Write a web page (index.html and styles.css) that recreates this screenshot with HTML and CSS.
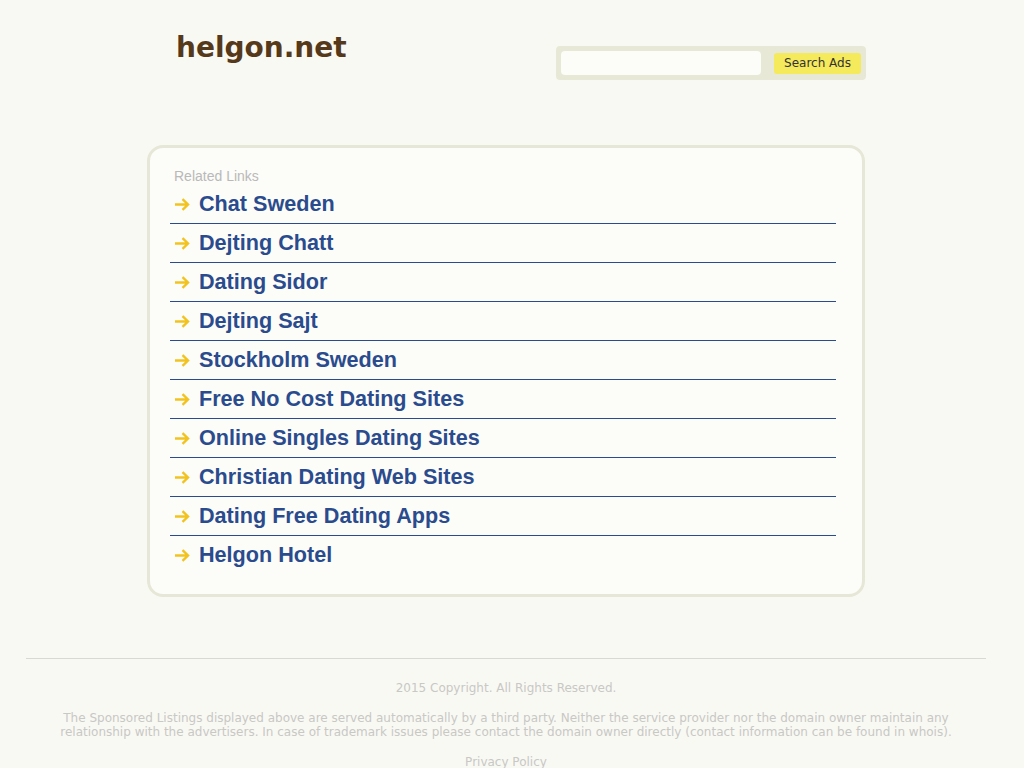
FILE: index.html
```html
<!DOCTYPE html>
<html>
<head>
<meta charset="utf-8">
<title>helgon.net</title>
<link rel="stylesheet" href="styles.css">
</head>
<body>
<div class="page">
  <div class="main">
    <div class="header">
      <div class="logo">helgon.net</div>
      <form class="search">
        <input class="search-input" type="text">
        <button class="search-btn" type="button">Search Ads</button>
      </form>
    </div>
    <div class="box">
      <div class="related">Related Links</div>
      <ul class="links">
        <li><svg class="arrow" viewBox="0 0 16 13"><path d="M1 6.5H14M8.5 1.2L14 6.5L8.5 11.8"/></svg><a href="#">Chat Sweden</a></li>
        <li><svg class="arrow" viewBox="0 0 16 13"><path d="M1 6.5H14M8.5 1.2L14 6.5L8.5 11.8"/></svg><a href="#">Dejting Chatt</a></li>
        <li><svg class="arrow" viewBox="0 0 16 13"><path d="M1 6.5H14M8.5 1.2L14 6.5L8.5 11.8"/></svg><a href="#">Dating Sidor</a></li>
        <li><svg class="arrow" viewBox="0 0 16 13"><path d="M1 6.5H14M8.5 1.2L14 6.5L8.5 11.8"/></svg><a href="#">Dejting Sajt</a></li>
        <li><svg class="arrow" viewBox="0 0 16 13"><path d="M1 6.5H14M8.5 1.2L14 6.5L8.5 11.8"/></svg><a href="#">Stockholm Sweden</a></li>
        <li><svg class="arrow" viewBox="0 0 16 13"><path d="M1 6.5H14M8.5 1.2L14 6.5L8.5 11.8"/></svg><a href="#">Free No Cost Dating Sites</a></li>
        <li><svg class="arrow" viewBox="0 0 16 13"><path d="M1 6.5H14M8.5 1.2L14 6.5L8.5 11.8"/></svg><a href="#">Online Singles Dating Sites</a></li>
        <li><svg class="arrow" viewBox="0 0 16 13"><path d="M1 6.5H14M8.5 1.2L14 6.5L8.5 11.8"/></svg><a href="#">Christian Dating Web Sites</a></li>
        <li><svg class="arrow" viewBox="0 0 16 13"><path d="M1 6.5H14M8.5 1.2L14 6.5L8.5 11.8"/></svg><a href="#">Dating Free Dating Apps</a></li>
        <li><svg class="arrow" viewBox="0 0 16 13"><path d="M1 6.5H14M8.5 1.2L14 6.5L8.5 11.8"/></svg><a href="#">Helgon Hotel</a></li>
      </ul>
    </div>
  </div>
  <div class="footer">
    <p class="copy">2015 Copyright. All Rights Reserved.</p>
    <p class="disclaimer">The Sponsored Listings displayed above are served automatically by a third party. Neither the service provider nor the domain owner maintain any relationship with the advertisers. In case of trademark issues please contact the domain owner directly (contact information can be found in whois).</p>
    <p class="privacy"><a href="#">Privacy Policy</a></p>
  </div>
</div>
</body>
</html>
```
FILE: styles.css
```css
html, body {
  margin: 0;
  padding: 0;
  background: #f9f9f4;
}
body {
  font-family: "DejaVu Sans", sans-serif;
}
.page {
  width: 1012px;
}
.main {
  width: 718px;
  margin: 0 auto;
}
.header {
  display: flex;
  justify-content: space-between;
  align-items: flex-start;
  height: 145px;
}
.logo {
  font-family: "DejaVu Sans", sans-serif;
  font-weight: bold;
  font-size: 28px;
  color: #55391a;
  margin: 31px 0 0 29px;
  line-height: 34px;
}
.search {
  display: flex;
  align-items: center;
  margin: 46px -1px 0 0;
  width: 310px;
  height: 34px;
  box-sizing: border-box;
  padding: 0 5px;
  background: #e8e8d6;
  border-radius: 4px;
}
.search-input {
  width: 200px;
  height: 24px;
  box-sizing: border-box;
  border: none;
  border-radius: 4px;
  background: #fcfcf8;
  padding: 0;
  margin: 0;
}
.search-btn {
  margin: 1px 0 0 13px;
  width: 87px;
  height: 21px;
  border: none;
  border-radius: 3px;
  background: #f5e95c;
  color: #333;
  font-family: "DejaVu Sans", sans-serif;
  font-size: 12px;
  padding: 0;
  line-height: 21px;
}
.box {
  border: 3px solid #e7e7d7;
  border-radius: 16px;
  background: #fcfcf8;
  padding: 20px 26px 20px 20px;
}
.related {
  font-family: "Liberation Sans", Arial, sans-serif;
  font-size: 14px;
  line-height: 17px;
  color: #b9b9b9;
  padding-left: 4px;
}
.links {
  list-style: none;
  margin: 0;
  padding: 0;
}
.links li {
  height: 38px;
  border-bottom: 1px solid #2a4b8d;
  padding-left: 4px;
  display: flex;
  align-items: center;
}
.links li:last-child {
  border-bottom: none;
}
.arrow {
  width: 16px;
  height: 13px;
  margin: 1px 9px 0 0;
  fill: none;
  stroke: #f2c21e;
  stroke-width: 2.4;
  flex: none;
}
.links a {
  font-family: "Liberation Sans", Arial, sans-serif;
  font-weight: bold;
  font-size: 21.6px;
  line-height: 38px;
  color: #2a4b8d;
  text-decoration: none;
}
.footer {
  margin: 61px 26px 0 26px;
  border-top: 1px solid #d9d9d4;
  text-align: center;
  font-size: 12px;
  color: #c8c8c4;
}
.footer p {
  margin: 0;
}
.copy {
  padding-top: 22px;
  line-height: 14px;
}
.disclaimer {
  margin: 16px auto 0 !important;
  width: 900px;
  line-height: 14px;
}
.privacy {
  padding-top: 16px;
  line-height: 14px;
}
.privacy a {
  color: #c8c8c4;
  text-decoration: none;
}
```
